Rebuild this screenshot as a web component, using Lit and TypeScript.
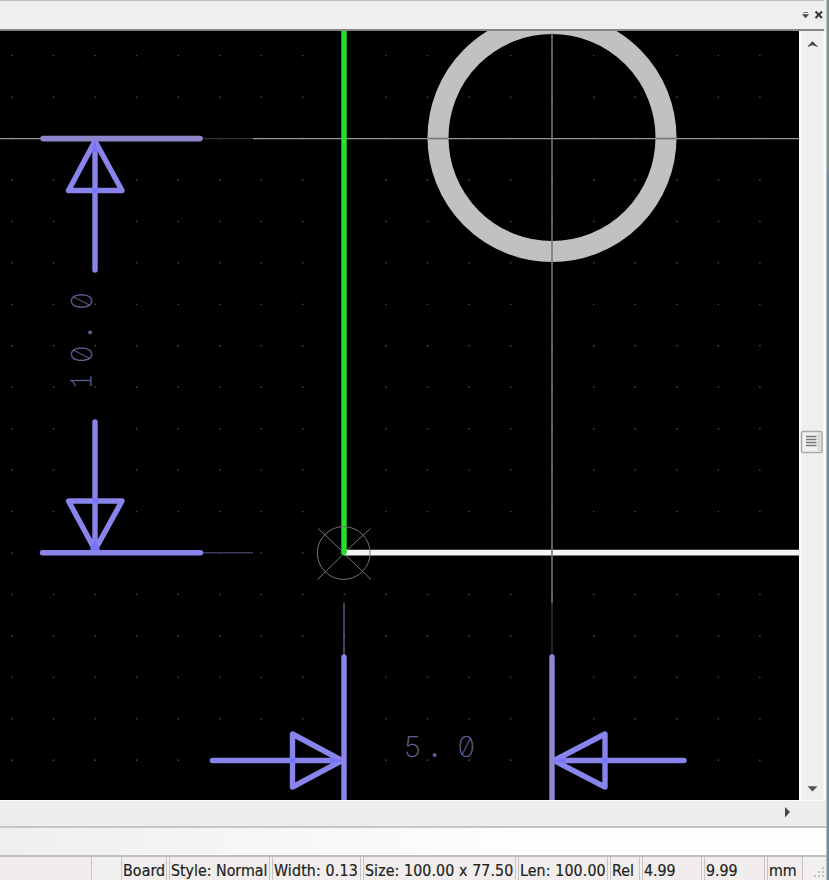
import { LitElement, html, svg, css } from "lit";
import { customElement } from "lit/decorators.js";

const STEP = 41.45;
const dots: Array<[number, number]> = [];
for (let c = 0; c < 19; c++)
  for (let r = 0; r < 18; r++) dots.push([12 + c * 41.55, 55.6 + r * STEP]);

@customElement("board-canvas")
class BoardCanvas extends LitElement {
  static styles = css`
    :host { display: block; width: 799px; height: 769px; background: #000; overflow: hidden; }
    svg { display: block; }
    .dim { fill: none; stroke: #8884ec; stroke-width: 5.4; stroke-linecap: round; stroke-linejoin: round; }
    .node { fill: #7774ff; }
    .mix { stroke: #8d86c9; stroke-width: 5.6; stroke-linecap: round; }
    .label { font-family: Inter, "Liberation Mono", sans-serif; font-weight: 200; font-size: 29px;
      font-feature-settings: "zero"; fill: #625f92; text-anchor: middle; }
    .one { font-family: "Liberation Mono", monospace; font-size: 34px; fill: #625f92; stroke: #000; stroke-width: 1; text-anchor: middle; }
    .point { font-weight: 500; font-size: 27px; }
    .guide { stroke: #999; stroke-width: 1.4; fill: none; }
    .origin { stroke: #747474; stroke-width: 1; fill: none; }
  `;
  render() {
    return html`<svg width="799" height="769" viewBox="0 31 799 769">
      ${dots.map(([x, y]) => svg`<circle cx=${x} cy=${y} r="0.9" fill="#404040" />`)}
      <circle cx="552" cy="137.5" r="114" fill="none" stroke="#c1c1c1" stroke-width="21" />
      <path class="guide" d="M0 138.6H42M253 138.6H800" />
      <path d="M202 138.6H253" stroke="#33322b" stroke-width="1.4" />
      <path d="M428 138.6H448M656 138.6H676" stroke="#737373" stroke-width="1.5" />
      <path d="M202 552.8H253" stroke="#3b395c" stroke-width="1.6" />
      <path d="M344 603V655" stroke="#626080" stroke-width="1.4" />
      <path d="M552 603V655" stroke="#35342b" stroke-width="1.4" />
      <path d="M344 552.6H800" stroke="#f7f3f7" stroke-width="5.6" />
      <path d="M552 33V603" stroke="#797979" stroke-width="1.6" />
      <path d="M344 31V552.6" stroke="#27e02d" stroke-width="5.4" />
      <circle cx="344" cy="552.8" r="2.7" fill="#27e02d" />
      <circle class="origin" cx="343.7" cy="553" r="26.4" />
      <path class="origin" d="M318 528.5L341 550M347 550L370.5 528.5M317.5 579.5L342 555.5M346 555.5L371 579.5" />
      <path class="mix" d="M43 138.6H200" />
      <path class="dim" d="M95 141V270M95 141L68.5 190.5H122L95 141" />
      <path class="dim" d="M42.5 552.8H200.5M95 422V550M95 550L68.5 501H122L95 550" />
      <path class="dim" d="M344 657V803M212.5 760.5H342M342 760.5L292.500 734V787L342 760.5" />
      <path class="dim" d="M684 760.5H554M554 760.5L605 734V787L554 760.5" />
      <path d="M552 657V803" stroke="#8d86d0" stroke-width="5.4" stroke-linecap="round" />
      <path class="node" d="M92.3 152L95 139L97.7 152ZM92.3 188H97.7V193H92.3ZM92.3 498.5H97.7V503.5H92.3ZM90 550L95 538L100 550Z" />
      <path class="node" d="M289.8 757.8H295.2V763.2H289.8ZM330 757.8L343 760.5L330 763.2ZM602.3 757.8H607.7V763.2H602.3ZM566 757.8L553 760.5L566 763.2Z" />
      <text class="label" y="757" x="412.5 434.5 466.3">5<tspan class="point">.</tspan>0</text>
      <text class="one" transform="translate(92 381.5) rotate(-90) scale(0.65 1)">1</text>
      <text class="label" transform="translate(91.5 0) rotate(-90)" y="0" x="-354.2 -332.5 -301">0<tspan class="point">.</tspan>0</text>
    </svg>`;
  }
}

@customElement("app-root")
class AppRoot extends LitElement {
  static styles = css`
    :host { display: flex; width: 829px; height: 880px; overflow: hidden; background: #f0f0f0; }
    .main { width: 826px; display: flex; flex-direction: column; }
    .edge { width: 3px; background: linear-gradient(90deg, #b5bfc5 0 1px, transparent 1px), linear-gradient(#8b9093 0 174px, #728f9b 176px); }
    .caption { box-sizing: border-box; height: 31px; border-top: 1px solid #bdbdbd; border-bottom: 2px solid #858585;
      display: flex; justify-content: flex-end; margin-right: 2px; background: #efefef; }
    .work { display: flex; height: 769px; }
    .vbar { width: 27px; display: flex; flex-direction: column; align-items: flex-end;
      background: linear-gradient(90deg, #fafafa 0 2px, #efefef 3px 24px, #fafafa 25px); }
    .thumb { margin-top: 369px; margin-bottom: auto; }
    .hbar { box-sizing: border-box; height: 28px; background: #ededed; border-top: 1px solid #fafafa; border-bottom: 2px solid #c6c6c6;
      display: flex; justify-content: flex-end; padding-right: 32px; }
    .blank { height: 27px; background: linear-gradient(90deg, #efefef, #fefefe 65%); }
    .status { box-sizing: border-box; flex: 1; border-top: 2px solid #bebebe; display: flex; background: #f2f0ef;
      font: 15.8px "DejaVu Sans Condensed", "DejaVu Sans", sans-serif; font-stretch: condensed; color: #222;
      -webkit-text-stroke: 0.2px #222; }
    .cell { box-sizing: border-box; height: 23px; margin-right: 2px; border-right: 1px solid #c8c5c4; border-left: 1px solid #c8c5c4;
      background: #f0edec; line-height: 27px; padding-left: 1px; white-space: pre; }
    .first { width: 92px; margin-right: 29px; border-left: 0; }
    .grip { align-self: flex-end; margin-left: auto; }
    svg { display: block; }
  `;
  private cells: Array<[string, number, number]> = [
    ["Board", 46, 0.1], ["Style: Normal", 101, 0], ["Width: 0.13", 89, 0.15],
    ["Size: 100.00 x 77.50", 153, 0.1], ["Len: 100.00", 90, 0.12], ["Rel", 30, 0.1],
    ["4.99", 60, 0], ["9.99", 61, 0], ["mm", 36, 0],
  ];
  render() {
    return html`
      <div class="main">
        <div class="caption">
          <svg width="26" height="28" viewBox="798 1 26 28">
            <path d="M803 12.5H808M802.5 14.5H808.5L805.500 18Z" fill="#444" stroke="#666" stroke-width="0.8" />
            <path d="M815.5 11.5L822 18M822 11.5L815.5 18" stroke="#333" stroke-width="2" />
          </svg>
        </div>
        <div class="work">
          <board-canvas></board-canvas>
          <div class="vbar">
            <svg width="26" height="28" viewBox="800 31 26 28"><path d="M808 46.5L812.5 41.5L817.5 46.5L812.5 44.8Z" fill="#444" stroke="#555" stroke-width="0.8" /></svg>
            <svg class="thumb" width="26" height="26" viewBox="800 428 26 26">
              <rect x="801.5" y="431.5" width="20.5" height="21" rx="1.5" fill="#f1f1f1" stroke="#aaa" stroke-width="1.5" />
              <path d="M819 433V451" stroke="#d6d6d6" stroke-width="3" />
              <path d="M806 436.5H816.5M806 439.5H816.5M806 442.5H816.5M806 445.5H816.5" stroke="#777" stroke-width="1.4" />
            </svg>
            <svg width="26" height="28" viewBox="800 772 26 28"><path d="M807.5 786.2H817.5L812.5 791.5Z" fill="#555" /></svg>
          </div>
        </div>
        <div class="hbar"><svg width="12" height="25" viewBox="782 801 12 25"><path d="M785 807L790 812L785 817.5Z" fill="#484848" /></svg></div>
        <div class="blank"></div>
        <div class="status">
          <div class="cell first"></div>
          ${this.cells.map(([t, w, s]) => html`<div class="cell" style="width:${w}px;letter-spacing:${s}px">${t}</div>`)}
          <svg class="grip" width="14" height="14" viewBox="0 0 14 14">
            <path d="M10 1h2v2h-2zM6 5h2v2H6zM10 5h2v2h-2zM2 9h2v2H2zM6 9h2v2H6zM10 9h2v2h-2z" fill="#c5c3c2" />
          </svg>
        </div>
      </div>
      <div class="edge"></div>`;
  }
}
